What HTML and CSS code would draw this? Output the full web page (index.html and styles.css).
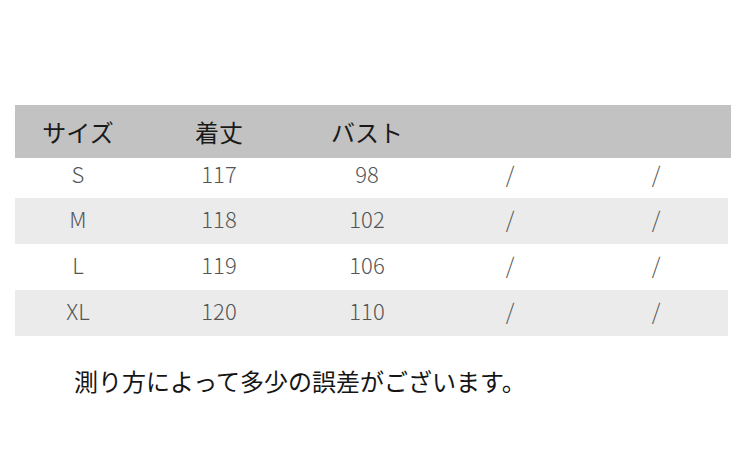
FILE: index.html
```html
<!DOCTYPE html>
<html lang="ja">
<head>
<meta charset="utf-8">
<title>サイズ表</title>
<link rel="stylesheet" href="styles.css">
</head>
<body>
<div class="size-table">
  <div class="row head">
    <div class="cell">サイズ</div>
    <div class="cell">着丈</div>
    <div class="cell">バスト</div>
    <div class="cell"></div>
    <div class="cell"></div>
  </div>
  <div class="row data first">
    <div class="cell">S</div>
    <div class="cell">117</div>
    <div class="cell">98</div>
    <div class="cell">/</div>
    <div class="cell">/</div>
  </div>
  <div class="row data shaded">
    <div class="cell">M</div>
    <div class="cell">118</div>
    <div class="cell">102</div>
    <div class="cell">/</div>
    <div class="cell">/</div>
  </div>
  <div class="row data">
    <div class="cell">L</div>
    <div class="cell">119</div>
    <div class="cell">106</div>
    <div class="cell">/</div>
    <div class="cell">/</div>
  </div>
  <div class="row data shaded">
    <div class="cell">XL</div>
    <div class="cell">120</div>
    <div class="cell">110</div>
    <div class="cell">/</div>
    <div class="cell">/</div>
  </div>
</div>
<p class="note">測り方によって多少の誤差がございます。</p>
</body>
</html>
```
FILE: styles.css
```css
html, body {
  margin: 0;
  padding: 0;
  background: #ffffff;
}

body {
  font-family: "Noto Sans CJK JP", "Noto Sans", sans-serif;
  width: 750px;
  height: 455px;
  overflow: hidden;
}

.size-table {
  margin: 105px 0 0 15px;
  width: 716px;
}

.row {
  display: grid;
  grid-template-columns: 126px 156px 140px 146px 146px;
}

.cell {
  text-align: center;
  white-space: nowrap;
}

.head {
  background: #c2c2c2;
  height: 53px;
  font-size: 24px;
  line-height: 53px;
  color: #1a1a1a;
}

.data {
  height: 46px;
  font-size: 22px;
  font-weight: 300;
  line-height: 40px;
  color: #555555;
}

.data.first {
  height: 40px;
  line-height: 30px;
}

.shaded {
  background: #ebebeb;
  margin-right: 3px;
}

.note {
  margin: 30px 0 0 74px;
  font-size: 24px;
  line-height: 30px;
  color: #151515;
  white-space: nowrap;
}
```
